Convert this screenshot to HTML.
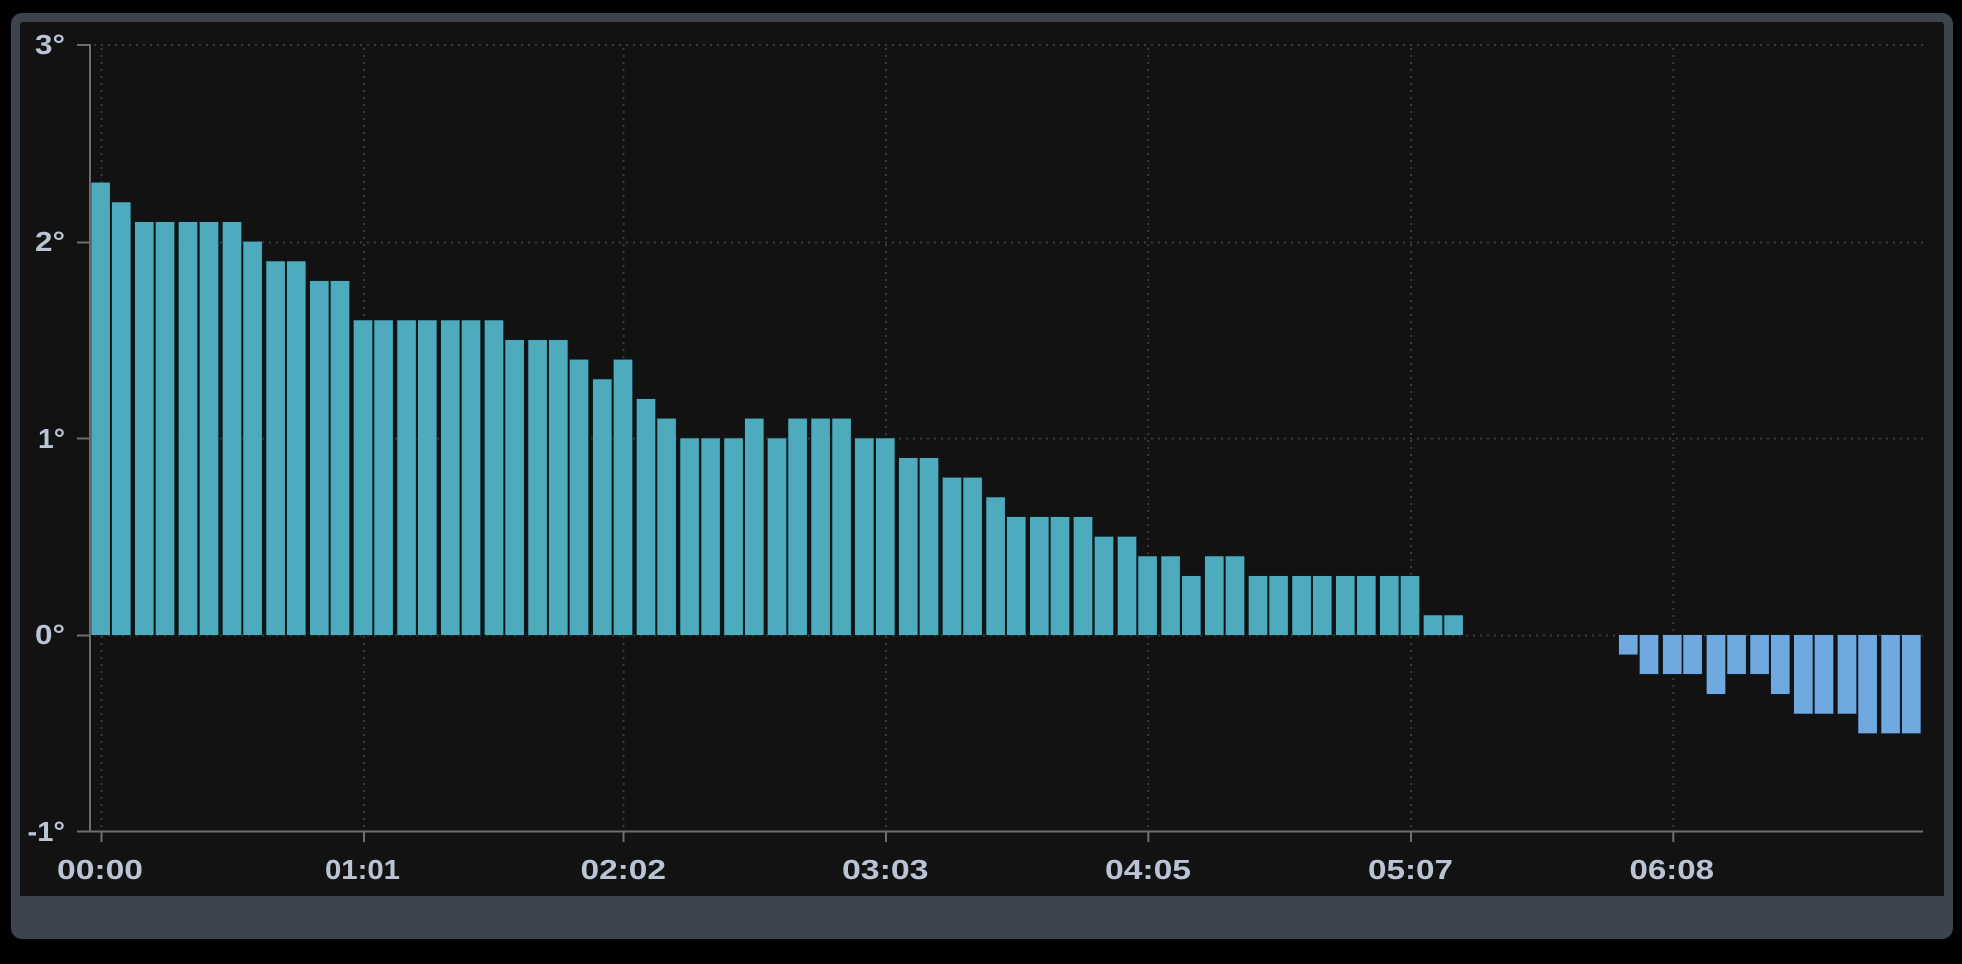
<!DOCTYPE html>
<html>
<head>
<meta charset="utf-8">
<style>
html,body{margin:0;padding:0;width:1962px;height:964px;background:#010103;overflow:hidden}
#card{position:absolute;left:11px;top:13px;width:1942px;height:926px;background:#3d444d;border-radius:11px}
#inner{position:absolute;left:20px;top:22px;width:1924px;height:874px;background:#121212;border-radius:3px 3px 0 0}
svg{position:absolute;left:0;top:0}
text{font-family:"Liberation Sans",sans-serif;font-weight:700;font-size:28px;fill:#bac4d4}
#c rect{fill:#4eabbe;stroke:#0a2327;stroke-width:1;paint-order:stroke}
#b rect{fill:#70a9e0;stroke:#0c2238;stroke-width:1;paint-order:stroke}
</style>
</head>
<body>
<div id="card"></div>
<div id="inner"></div>
<svg width="1962" height="964" viewBox="0 0 1962 964">
<g stroke="#3a3a3a" stroke-width="2" stroke-dasharray="2 5" fill="none">
<path d="M94 45H1923"/>
<path d="M94 242.5H1923"/>
<path d="M94 438.5H1923"/>
<path d="M94 635.5H1923"/>
<path d="M101.5 48V830"/>
<path d="M364 48V830"/>
<path d="M623.5 48V830"/>
<path d="M886 48V830"/>
<path d="M1148.3 48V830"/>
<path d="M1411 48V830"/>
<path d="M1673.3 48V830"/>
</g>
<g stroke="#6e6e6e" stroke-width="2" fill="none">
<path d="M77 45H90V831.5"/>
<path d="M77 242.5H90"/>
<path d="M77 438.5H90"/>
<path d="M77 635.5H90"/>
<path d="M77 831.5H1923"/>
<path d="M101.5 831.5V842"/>
<path d="M364 831.5V842"/>
<path d="M623.5 831.5V842"/>
<path d="M886 831.5V842"/>
<path d="M1148.3 831.5V842"/>
<path d="M1411 831.5V842"/>
<path d="M1673.3 831.5V842"/>
</g>
<g id="c">
<rect x="91.3" y="182.6" width="18.6" height="452.4"/>
<rect x="112" y="202.3" width="18.6" height="432.7"/>
<rect x="135" y="222" width="18.6" height="413"/>
<rect x="155.7" y="222" width="18.6" height="413"/>
<rect x="178.7" y="222" width="18.6" height="413"/>
<rect x="199.7" y="222" width="18.6" height="413"/>
<rect x="222.7" y="222" width="18.6" height="413"/>
<rect x="243.3" y="241.6" width="18.6" height="393.4"/>
<rect x="266.3" y="261.3" width="18.6" height="373.7"/>
<rect x="287" y="261.3" width="18.6" height="373.7"/>
<rect x="310" y="281" width="18.6" height="354"/>
<rect x="330.7" y="281" width="18.6" height="354"/>
<rect x="353.7" y="320.3" width="18.6" height="314.7"/>
<rect x="374.3" y="320.3" width="18.6" height="314.7"/>
<rect x="397.3" y="320.3" width="18.6" height="314.7"/>
<rect x="418" y="320.3" width="18.6" height="314.7"/>
<rect x="441" y="320.3" width="18.6" height="314.7"/>
<rect x="461.7" y="320.3" width="18.6" height="314.7"/>
<rect x="484.7" y="320.3" width="18.6" height="314.7"/>
<rect x="505.3" y="340" width="18.6" height="295"/>
<rect x="528.3" y="340" width="18.6" height="295"/>
<rect x="549" y="340" width="18.6" height="295"/>
<rect x="569.7" y="359.6" width="18.6" height="275.4"/>
<rect x="593" y="379.3" width="18.6" height="255.7"/>
<rect x="613.7" y="359.6" width="18.6" height="275.4"/>
<rect x="636.7" y="399" width="18.6" height="236"/>
<rect x="657.3" y="418.6" width="18.6" height="216.4"/>
<rect x="680.3" y="438.3" width="18.6" height="196.7"/>
<rect x="701.3" y="438.3" width="18.6" height="196.7"/>
<rect x="724.3" y="438.3" width="18.6" height="196.7"/>
<rect x="745" y="418.6" width="18.6" height="216.4"/>
<rect x="767.7" y="438.3" width="18.6" height="196.7"/>
<rect x="788.3" y="418.6" width="18.6" height="216.4"/>
<rect x="811.3" y="418.6" width="18.6" height="216.4"/>
<rect x="832.3" y="418.6" width="18.6" height="216.4"/>
<rect x="855" y="438.3" width="18.6" height="196.7"/>
<rect x="876" y="438.3" width="18.6" height="196.7"/>
<rect x="899" y="458" width="18.6" height="177"/>
<rect x="919.7" y="458" width="18.6" height="177"/>
<rect x="942.7" y="477.6" width="18.6" height="157.4"/>
<rect x="963.3" y="477.6" width="18.6" height="157.4"/>
<rect x="986.3" y="497.3" width="18.6" height="137.7"/>
<rect x="1007" y="517" width="18.6" height="118"/>
<rect x="1030" y="517" width="18.6" height="118"/>
<rect x="1050.7" y="517" width="18.6" height="118"/>
<rect x="1073.7" y="517" width="18.6" height="118"/>
<rect x="1094.7" y="536.7" width="18.6" height="98.3"/>
<rect x="1117.7" y="536.7" width="18.6" height="98.3"/>
<rect x="1138.3" y="556.3" width="18.6" height="78.7"/>
<rect x="1161.3" y="556.3" width="18.6" height="78.7"/>
<rect x="1182" y="576" width="18.6" height="59"/>
<rect x="1205" y="556.3" width="18.6" height="78.7"/>
<rect x="1225.7" y="556.3" width="18.6" height="78.7"/>
<rect x="1248.7" y="576" width="18.6" height="59"/>
<rect x="1269.3" y="576" width="18.6" height="59"/>
<rect x="1292.3" y="576" width="18.6" height="59"/>
<rect x="1313" y="576" width="18.6" height="59"/>
<rect x="1336" y="576" width="18.6" height="59"/>
<rect x="1357" y="576" width="18.6" height="59"/>
<rect x="1380" y="576" width="18.6" height="59"/>
<rect x="1400.7" y="576" width="18.6" height="59"/>
<rect x="1423.7" y="615.3" width="18.6" height="19.7"/>
<rect x="1444.3" y="615.3" width="18.6" height="19.7"/>
</g>
<g id="b">
<rect x="1619" y="635" width="18.6" height="19.5"/>
<rect x="1639.7" y="635" width="18.6" height="39"/>
<rect x="1663" y="635" width="18.6" height="39"/>
<rect x="1683.3" y="635" width="18.6" height="39"/>
<rect x="1706.7" y="635" width="18.6" height="59"/>
<rect x="1727.3" y="635" width="18.6" height="39"/>
<rect x="1750.3" y="635" width="18.6" height="39"/>
<rect x="1771" y="635" width="18.6" height="59"/>
<rect x="1794" y="635" width="18.6" height="78.7"/>
<rect x="1814.7" y="635" width="18.6" height="78.7"/>
<rect x="1837.7" y="635" width="18.6" height="78.7"/>
<rect x="1858.3" y="635" width="18.6" height="98.3"/>
<rect x="1881.3" y="635" width="18.6" height="98.3"/>
<rect x="1902" y="635" width="18.6" height="98.3"/>
</g>
<text x="35" y="54" textLength="30" lengthAdjust="spacingAndGlyphs">3°</text>
<text x="35" y="251" textLength="30" lengthAdjust="spacingAndGlyphs">2°</text>
<text x="38" y="448" textLength="27" lengthAdjust="spacingAndGlyphs">1°</text>
<text x="35" y="644" textLength="30" lengthAdjust="spacingAndGlyphs">0°</text>
<text x="27.5" y="841" textLength="37.5" lengthAdjust="spacingAndGlyphs">-1°</text>
<text x="57" y="879" textLength="86" lengthAdjust="spacingAndGlyphs">00:00</text>
<text x="325" y="879" textLength="75" lengthAdjust="spacingAndGlyphs">01:01</text>
<text x="580.5" y="879" textLength="85.5" lengthAdjust="spacingAndGlyphs">02:02</text>
<text x="842" y="879" textLength="86.5" lengthAdjust="spacingAndGlyphs">03:03</text>
<text x="1105" y="879" textLength="86" lengthAdjust="spacingAndGlyphs">04:05</text>
<text x="1368" y="879" textLength="85" lengthAdjust="spacingAndGlyphs">05:07</text>
<text x="1629.5" y="879" textLength="84.5" lengthAdjust="spacingAndGlyphs">06:08</text>
</svg>
</body>
</html>
